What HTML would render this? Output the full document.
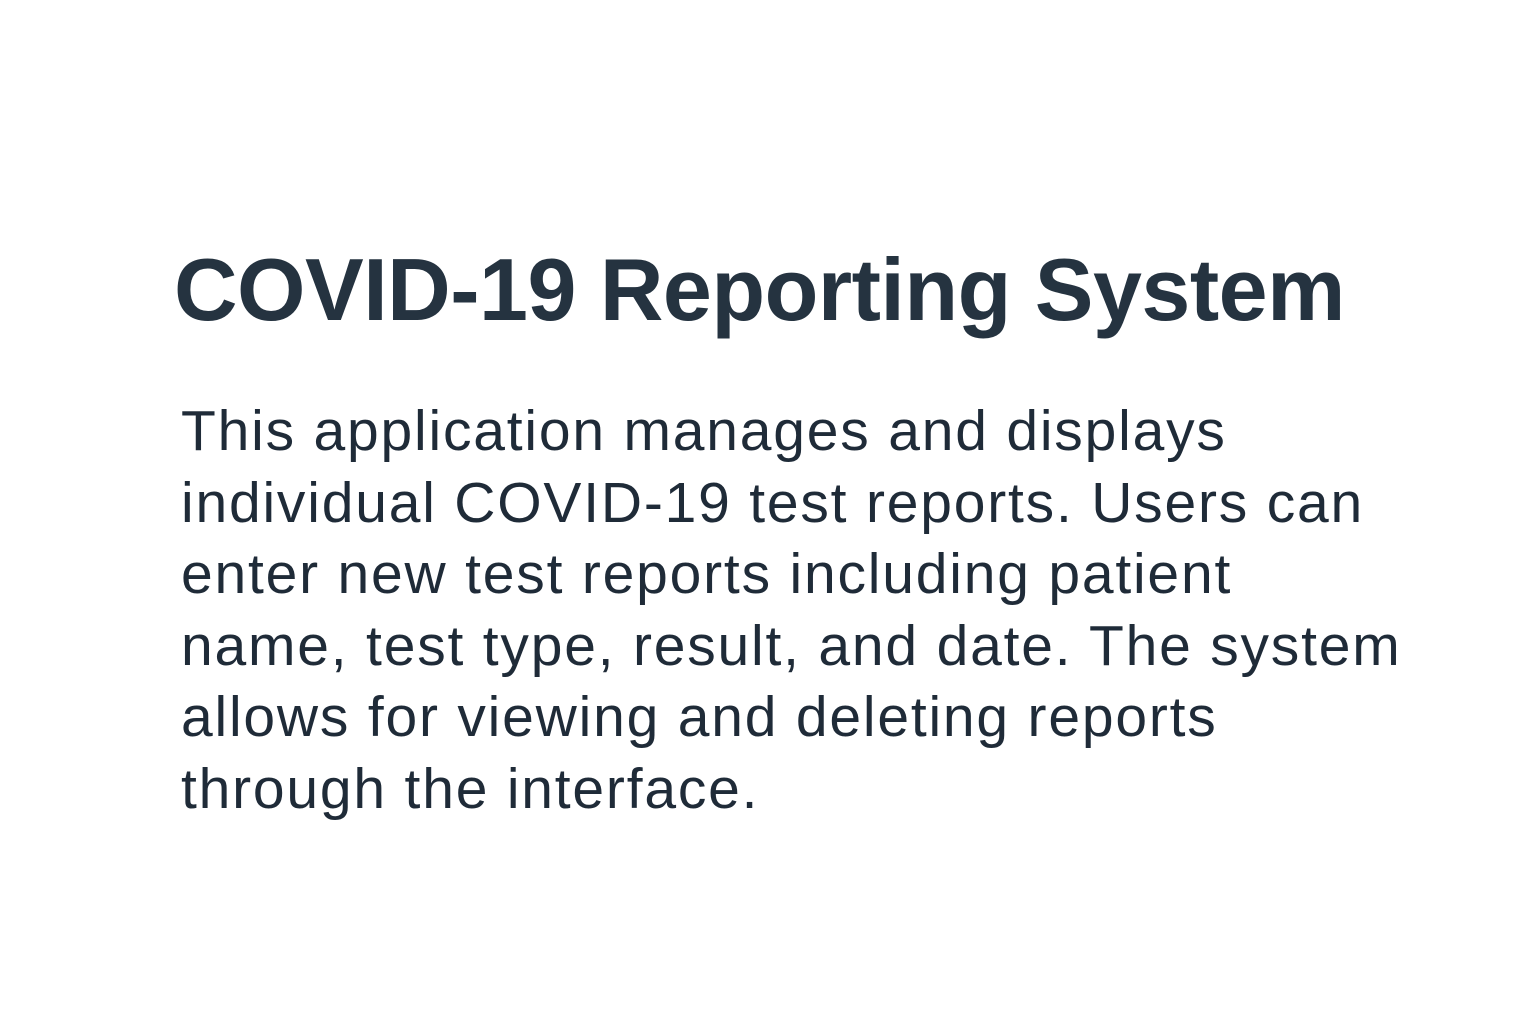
<!DOCTYPE html>
<html><head><meta charset="utf-8"><style>
html,body{margin:0;padding:0;background:#fff;width:1536px;height:1024px;overflow:hidden}
body{font-family:"Liberation Sans",sans-serif;color:#24303b;position:relative}
h1{position:absolute;left:174px;top:239px;margin:0;font-size:88px;font-weight:bold;white-space:nowrap;letter-spacing:-0.5px;color:#253340}
p{position:absolute;left:181px;top:396px;margin:0;font-size:57px;line-height:71.6px;white-space:nowrap;letter-spacing:1.8px;color:#1f2b38}
</style></head><body>
<h1>COVID-19 Reporting System</h1>
<p>This application manages and displays<br>individual COVID-19 test reports. Users can<br>enter new test reports including patient<br>name, test type, result, and date. The system<br>allows for viewing and deleting reports<br>through the interface.</p>
</body></html>
